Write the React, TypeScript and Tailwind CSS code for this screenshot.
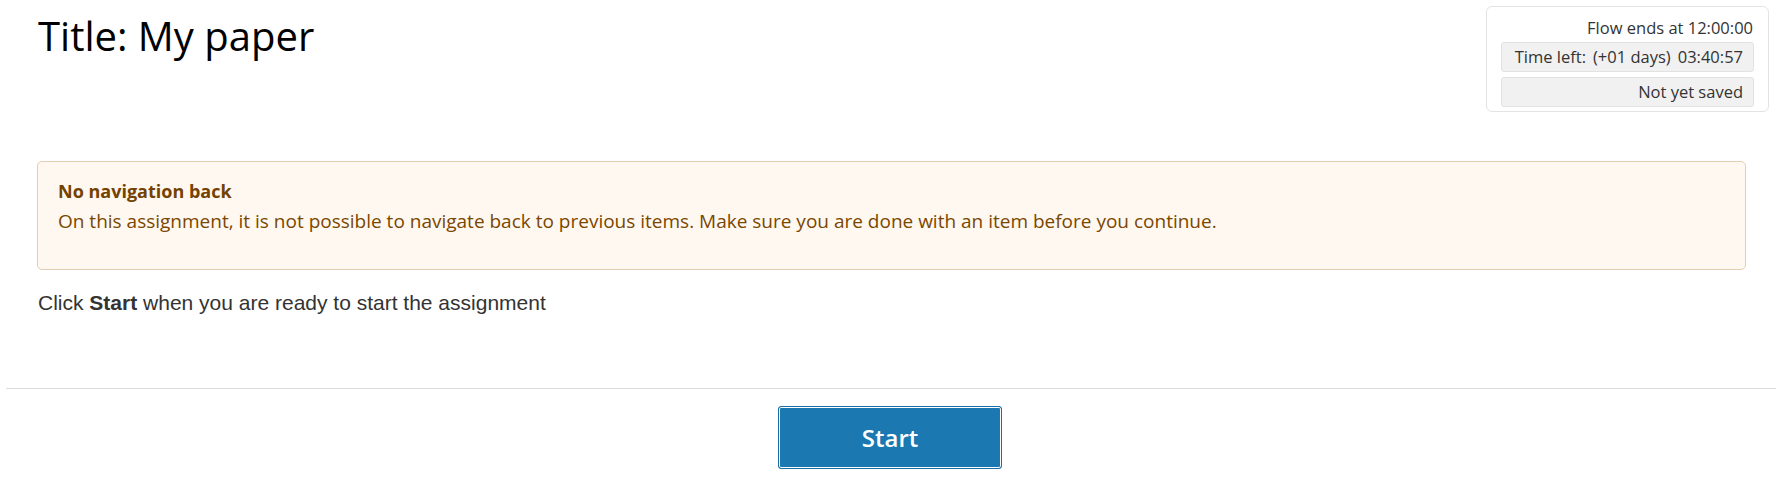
import React from 'react';

export default function App() {
  return (
    <div className="w-[1788px] h-[489px] bg-white text-[#333] font-['Open_Sans',sans-serif]">
      <div className="flex items-start justify-between pl-[38px] pr-[19px] pt-[6px]">
        <h1 className="mt-[6px] text-[40px] leading-[48px] font-normal text-black">Title: My paper</h1>
        <div className="w-[283px] rounded-[6px] border border-[#e3e3e3] px-[14px] pt-[9px] pb-[4px] text-[16.5px] text-[#333]">
          <div className="text-right leading-[24px] pr-[1px]">Flow ends at 12:00:00</div>
          <div className="mt-[2px] flex h-[30px] items-center justify-end rounded-[3px] border border-[#e2e2e2] bg-[#f1f1f1] pr-[10px]">
            <span>Time left:</span>
            <span className="ml-[7px]">(+01 days)</span>
            <span className="ml-[7px]">03:40:57</span>
          </div>
          <div className="mt-[5px] flex h-[30px] items-center justify-end rounded-[3px] border border-[#e2e2e2] bg-[#f1f1f1] pr-[10px]">
            Not yet saved
          </div>
        </div>
      </div>

      <div className="ml-[37px] mr-[42px] mt-[49px] h-[109px] rounded-[5px] border border-[#e2cfb3] bg-[#fff8f0] px-[20px] pt-[14px] leading-[30px] text-[#7a4700]">
        <div className="text-[18px] font-bold text-[#734200]">No navigation back</div>
        <p className="text-[19px]">
          On this assignment, it is not possible to navigate back to previous items. Make sure you are done with an item before you continue.
        </p>
      </div>

      <p className="ml-[38px] mt-[18px] font-['Liberation_Sans',Arial,sans-serif] text-[21px] leading-[30px] text-[#333]">
        Click <b>Start</b> when you are ready to start the assignment
      </p>

      <div className="ml-[6px] mr-[12px] mt-[70px] border-t border-[#dcdcdc]" />

      <div className="flex justify-center pt-[17px] pr-[8px]">
        <button className="h-[63px] w-[224px] rounded-[3px] border border-[#1a6fa6] bg-[#1b78b1] text-[24px] font-semibold text-white shadow-[inset_0_0_0_1px_#ffffff]">
          Start
        </button>
      </div>
    </div>
  );
}
